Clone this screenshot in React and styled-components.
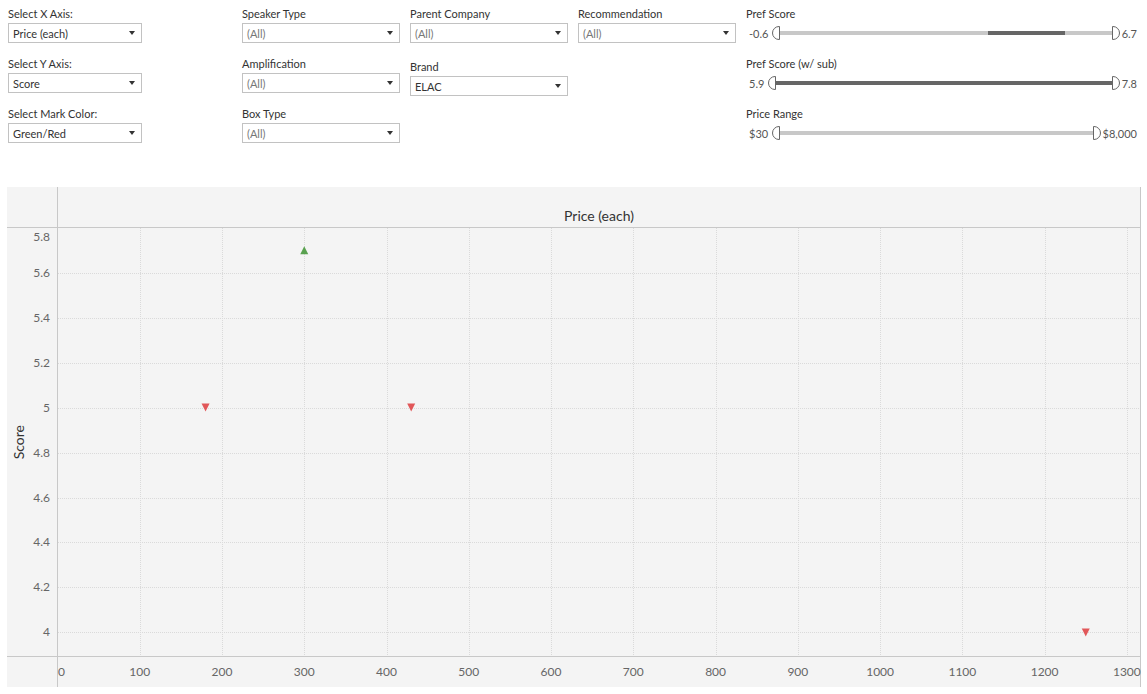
import React from "react";
import styled, { createGlobalStyle } from "styled-components";

const GlobalStyle = createGlobalStyle`
  html, body { margin: 0; padding: 0; background: #fff; }
  body { font-family: Lato, "Liberation Sans", sans-serif; color: #333; }
`;

const X_PER = 0.8226;
const Y_PER = 224.8;
const Y_BASE = 404.4;
const xPos = (v) => v * X_PER - 0.5;
const yPos = (v) => Y_BASE - (v - 4) * Y_PER;

const Page = styled.div`
  width: 1147px;
  height: 694px;
  overflow: hidden;
`;

const Controls = styled.div`
  display: flex;
  gap: 10px;
  height: 187px;
  box-sizing: border-box;
  padding: 7px 0 0 8px;
`;

const Column = styled.div`
  display: flex;
  flex-direction: column;
  gap: 14px;
  width: ${(p) => p.$width}px;
  margin-right: ${(p) => p.$extra || 0}px;
`;

const Field = styled.div`
  display: flex;
  flex-direction: column;
  gap: 2px;
  margin-top: ${(p) => p.$offset || 0}px;
`;

const Label = styled.div`
  font-size: 11px;
  line-height: 14px;
  color: #333;
  white-space: nowrap;
`;

const Select = styled.div`
  display: flex;
  align-items: center;
  justify-content: space-between;
  height: 20px;
  box-sizing: border-box;
  border: 1px solid #c2c2c2;
  background: #fff;
  padding: 0 6px 0 4px;
  font-size: 11px;
  color: ${(p) => (p.$muted ? "#777" : "#333")};
`;

const Arrow = styled.span`
  width: 0;
  height: 0;
  border-left: 3px solid transparent;
  border-right: 3px solid transparent;
  border-top: 4px solid #333;
`;

const SliderRow = styled.div`
  display: flex;
  align-items: center;
  height: 20px;
  padding-left: 3px;
`;

const Value = styled.span`
  font-size: 11px;
  color: #555;
  margin: ${(p) => (p.$end ? "0 0 0 2px" : "0 4px 0 0")};
`;

const Thumb = styled.span`
  width: 8px;
  height: 14px;
  box-sizing: border-box;
  border: 1px solid #666;
  background: #fff;
  border-radius: ${(p) => (p.$end ? "0 7px 7px 0" : "7px 0 0 7px")};
  flex-shrink: 0;
`;

const Track = styled.div`
  flex: 1;
  height: 4px;
  background: #c8c8c8;
  position: relative;
`;

const Fill = styled.div`
  position: absolute;
  top: 0;
  bottom: 0;
  background: #666;
`;

const Panel = styled.div`
  margin-left: 7px;
  width: 1134px;
  height: 500px;
  box-sizing: border-box;
  background: #f4f4f4;
  border-right: 1px solid #c8c8c8;
  display: grid;
  grid-template-columns: 51px 1fr;
  grid-template-rows: 41px 429px 30px;
`;

const Cell = styled.div`
  position: relative;
  box-sizing: border-box;
  border-right: ${(p) => (p.$right ? "1px solid #c8c8c8" : "none")};
  border-bottom: ${(p) => (p.$bottom ? "1px solid #c8c8c8" : "none")};
`;

const HeaderTitle = styled(Cell)`
  text-align: center;
  padding-top: 20px;
  font-size: 14px;
  line-height: 18px;
  color: #333;
`;

const YAxis = styled(Cell)`
  display: flex;
  align-items: center;
  padding-left: 4px;
`;

const AxisTitle = styled.span`
  writing-mode: vertical-rl;
  transform: rotate(180deg);
  font-size: 14px;
  line-height: 16px;
  color: #333;
`;

const YTick = styled.span`
  position: absolute;
  right: 7px;
  font-size: 12px;
  line-height: 16px;
  color: #666;
`;

const XTick = styled.span`
  position: absolute;
  top: 7px;
  font-size: 12px;
  line-height: 16px;
  color: #666;
  white-space: nowrap;
`;

const PlotSvg = styled.svg`
  display: block;
`;

const filtersA = [
  { label: "Select X Axis:", value: "Price (each)" },
  { label: "Select Y Axis:", value: "Score" },
  { label: "Select Mark Color:", value: "Green/Red" },
];
const filtersB = [
  { label: "Speaker Type", value: "(All)", muted: true },
  { label: "Amplification", value: "(All)", muted: true },
  { label: "Box Type", value: "(All)", muted: true },
];
const filtersC = [
  { label: "Parent Company", value: "(All)", muted: true },
  { label: "Brand", value: "ELAC", offset: 3 },
];
const filtersD = [{ label: "Recommendation", value: "(All)", muted: true }];

const sliders = [
  { label: "Pref Score", min: "-0.6", max: "6.7", from: 62.8, to: 86 },
  { label: "Pref Score (w/ sub)", min: "5.9", max: "7.8", from: 0, to: 100 },
  { label: "Price Range", min: "$30", max: "$8,000", from: 0, to: 0 },
];

const yTicks = [5.8, 5.6, 5.4, 5.2, 5, 4.8, 4.6, 4.4, 4.2, 4];
const xTicks = [0, 100, 200, 300, 400, 500, 600, 700, 800, 900, 1000, 1100, 1200, 1300];

const marks = [
  { x: 300, y: 5.7, up: true },
  { x: 180, y: 5.0 },
  { x: 430, y: 5.0 },
  { x: 1250, y: 4.0 },
];

const Filters = ({ items, width, extra }) => (
  <Column $width={width} $extra={extra}>
    {items.map((f) => (
      <Field key={f.label} $offset={f.offset}>
        <Label>{f.label}</Label>
        <Select $muted={f.muted}>
          <span>{f.value}</span>
          <Arrow />
        </Select>
      </Field>
    ))}
  </Column>
);

const Sliders = () => (
  <Column $width={391}>
    {sliders.map((s) => (
      <Field key={s.label}>
        <Label>{s.label}</Label>
        <SliderRow>
          <Value>{s.min}</Value>
          <Thumb />
          <Track>
            {s.to > s.from && (
              <Fill style={{ left: `${s.from}%`, width: `${s.to - s.from}%` }} />
            )}
          </Track>
          <Thumb $end />
          <Value $end>{s.max}</Value>
        </SliderRow>
      </Field>
    ))}
  </Column>
);

const Mark = ({ x, y, up }) => {
  const cx = xPos(x);
  const cy = yPos(y);
  const d = up
    ? `M${cx - 4} ${cy + 4} L${cx} ${cy - 4} L${cx + 4} ${cy + 4} Z`
    : `M${cx - 4} ${cy - 4} L${cx + 4} ${cy - 4} L${cx} ${cy + 4} Z`;
  return <path d={d} fill={up ? "#59a14f" : "#e15759"} />;
};

const Chart = () => (
  <Panel>
    <Cell $right $bottom />
    <HeaderTitle $bottom>Price (each)</HeaderTitle>
    <YAxis $right $bottom>
      <AxisTitle>Score</AxisTitle>
      {yTicks.map((t) => (
        <YTick key={t} style={{ top: Math.max(1, yPos(t) - 8) }}>
          {t}
        </YTick>
      ))}
    </YAxis>
    <Cell $bottom>
      <PlotSvg width="1082" height="428">
        {yTicks.slice(1).map((t) => (
          <line
            key={t}
            x1="0"
            x2="1082"
            y1={Math.round(yPos(t)) + 0.5}
            y2={Math.round(yPos(t)) + 0.5}
            stroke="#dadada"
            strokeDasharray="1 1"
          />
        ))}
        {xTicks.slice(1).map((t) => (
          <line
            key={t}
            y1="0"
            y2="428"
            x1={Math.round(xPos(t)) + 0.5}
            x2={Math.round(xPos(t)) + 0.5}
            stroke="#dadada"
            strokeDasharray="1 1"
          />
        ))}
        {marks.map((m, i) => (
          <Mark key={i} {...m} />
        ))}
      </PlotSvg>
    </Cell>
    <Cell $right />
    <Cell>
      {xTicks.map((t) => (
        <XTick
          key={t}
          style={
            t === 0
              ? { left: 0 }
              : { left: xPos(t), transform: "translateX(-50%)" }
          }
        >
          {t}
        </XTick>
      ))}
    </Cell>
  </Panel>
);

export default function App() {
  return (
    <Page>
      <GlobalStyle />
      <Controls>
        <Filters items={filtersA} width={134} extra={90} />
        <Filters items={filtersB} width={158} />
        <Filters items={filtersC} width={158} />
        <Filters items={filtersD} width={158} />
        <Sliders />
      </Controls>
      <Chart />
    </Page>
  );
}
